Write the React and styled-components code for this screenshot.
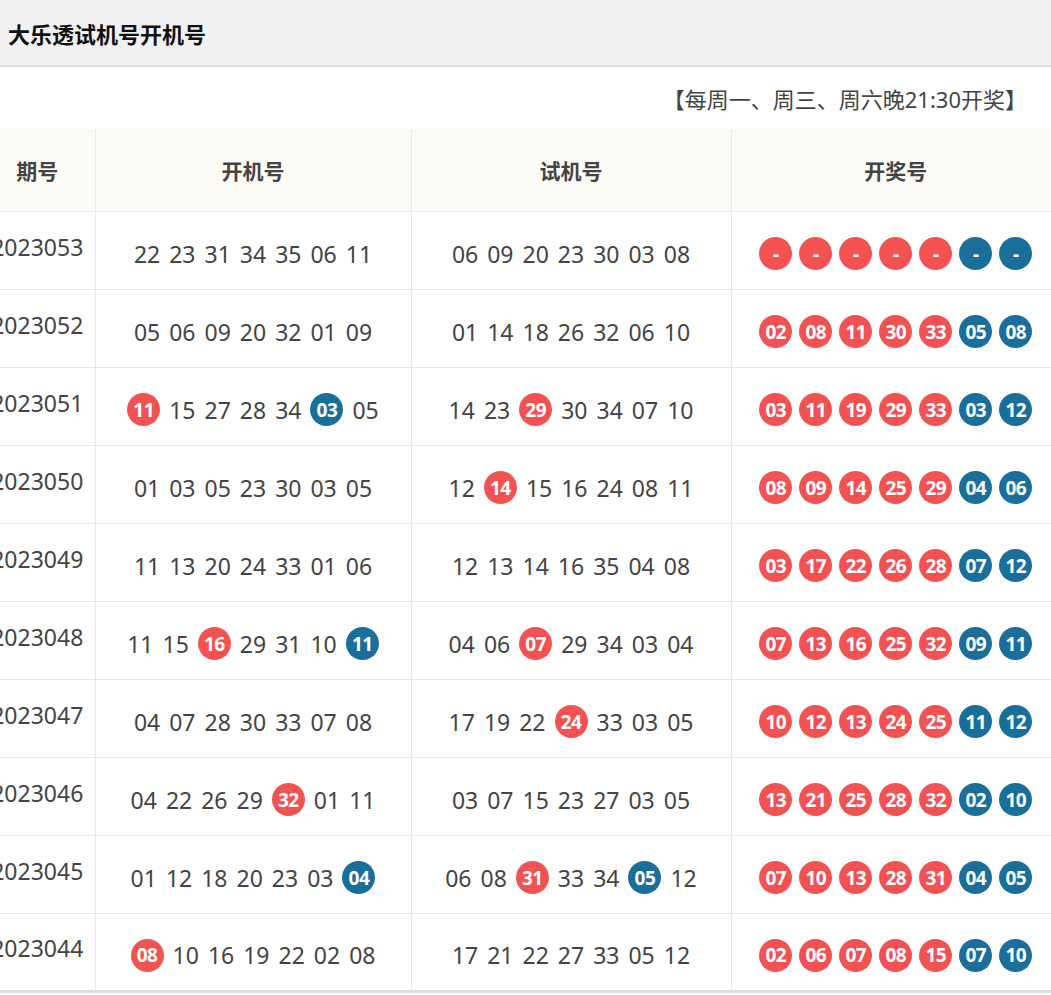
import React from 'react';
import styled, { createGlobalStyle } from 'styled-components';

const Global = createGlobalStyle`
  body { margin: 0; background: #fff; font-family: "Noto Sans", "Noto Sans CJK SC", sans-serif; overflow: hidden; }
`;

const TopBar = styled.div`
  height: 65px;
  background: #f1f1f1;
  border-bottom: 2px solid #dcdcdc;
  display: flex;
  align-items: center;
  padding-left: 8px;
  font-size: 22px;
  font-weight: bold;
  color: #111;
`;

const Notice = styled.div`
  height: 62px;
  display: flex;
  align-items: center;
  justify-content: flex-end;
  padding-right: 24px;
  font-size: 22px;
  color: #444;
`;

const Table = styled.table`
  margin-left: -20px;
  width: 1080px;
  table-layout: fixed;
  border-collapse: collapse;
  border-bottom: 3px solid #ddd;
`;

const Th = styled.th`
  height: 80px;
  background: #fdfbf5;
  font-size: 21px;
  font-weight: bold;
  color: #444;
  border-left: 1px solid #e8e8e8;
  border-bottom: 1px solid #e8e8e8;
  &:first-child { border-left: none; }
`;

const Row = styled.tr`
  height: 78px;
`;

const Td = styled.td`
  text-align: center;
  font-size: 23px;
  color: #444;
  border-left: 1px solid #e8e8e8;
  border-bottom: 1px solid #e8e8e8;
  padding: ${p => (p.$period ? '0 0 8px' : '6px 0 0')};
  &:first-child { border-left: none; }
`;

const Nums = styled.div`
  display: flex;
  justify-content: center;
  align-items: center;
  gap: ${p => (p.$balls ? '7px' : '9px')};
`;

const Ball = styled.span`
  width: 33px;
  height: 33px;
  border-radius: 50%;
  background: ${p => (p.$blue ? '#1a6e9a' : '#f25252')};
  color: #fff;
  font-size: 19px;
  font-weight: bold;
  display: inline-flex;
  align-items: center;
  justify-content: center;
  letter-spacing: -0.5px;
`;

// hits: indexes of the numbers drawn as balls (index 5 and 6 are back numbers)
const rows = [
  ['2023053', '22 23 31 34 35 06 11', [], '06 09 20 23 30 03 08', [], '- - - - - - -'],
  ['2023052', '05 06 09 20 32 01 09', [], '01 14 18 26 32 06 10', [], '02 08 11 30 33 05 08'],
  ['2023051', '11 15 27 28 34 03 05', [0, 5], '14 23 29 30 34 07 10', [2], '03 11 19 29 33 03 12'],
  ['2023050', '01 03 05 23 30 03 05', [], '12 14 15 16 24 08 11', [1], '08 09 14 25 29 04 06'],
  ['2023049', '11 13 20 24 33 01 06', [], '12 13 14 16 35 04 08', [], '03 17 22 26 28 07 12'],
  ['2023048', '11 15 16 29 31 10 11', [2, 6], '04 06 07 29 34 03 04', [2], '07 13 16 25 32 09 11'],
  ['2023047', '04 07 28 30 33 07 08', [], '17 19 22 24 33 03 05', [3], '10 12 13 24 25 11 12'],
  ['2023046', '04 22 26 29 32 01 11', [4], '03 07 15 23 27 03 05', [], '13 21 25 28 32 02 10'],
  ['2023045', '01 12 18 20 23 03 04', [6], '06 08 31 33 34 05 12', [2, 5], '07 10 13 28 31 04 05'],
  ['2023044', '08 10 16 19 22 02 08', [0], '17 21 22 27 33 05 12', [], '02 06 07 08 15 07 10'],
];

const NumList = ({ text, hits }) => (
  <Nums>
    {text.split(' ').map((n, i) =>
      hits.includes(i) ? <Ball key={i} $blue={i >= 5}>{n}</Ball> : <span key={i}>{n}</span>
    )}
  </Nums>
);

const BallList = ({ text }) => (
  <Nums $balls>
    {text.split(' ').map((n, i) => <Ball key={i} $blue={i >= 5}>{n}</Ball>)}
  </Nums>
);

export default function App() {
  return (
    <>
      <Global />
      <TopBar>大乐透试机号开机号</TopBar>
      <Notice>【每周一、周三、周六晚21:30开奖】</Notice>
      <Table>
        <colgroup>
          <col style={{ width: 115 }} />
          <col style={{ width: 316 }} />
          <col style={{ width: 320 }} />
          <col style={{ width: 329 }} />
        </colgroup>
        <thead>
          <tr>
            <Th>期号</Th>
            <Th>开机号</Th>
            <Th>试机号</Th>
            <Th>开奖号</Th>
          </tr>
        </thead>
        <tbody>
          {rows.map(r => (
            <Row key={r[0]}>
              <Td $period>{r[0]}</Td>
              <Td><NumList text={r[1]} hits={r[2]} /></Td>
              <Td><NumList text={r[3]} hits={r[4]} /></Td>
              <Td><BallList text={r[5]} /></Td>
            </Row>
          ))}
        </tbody>
      </Table>
    </>
  );
}
